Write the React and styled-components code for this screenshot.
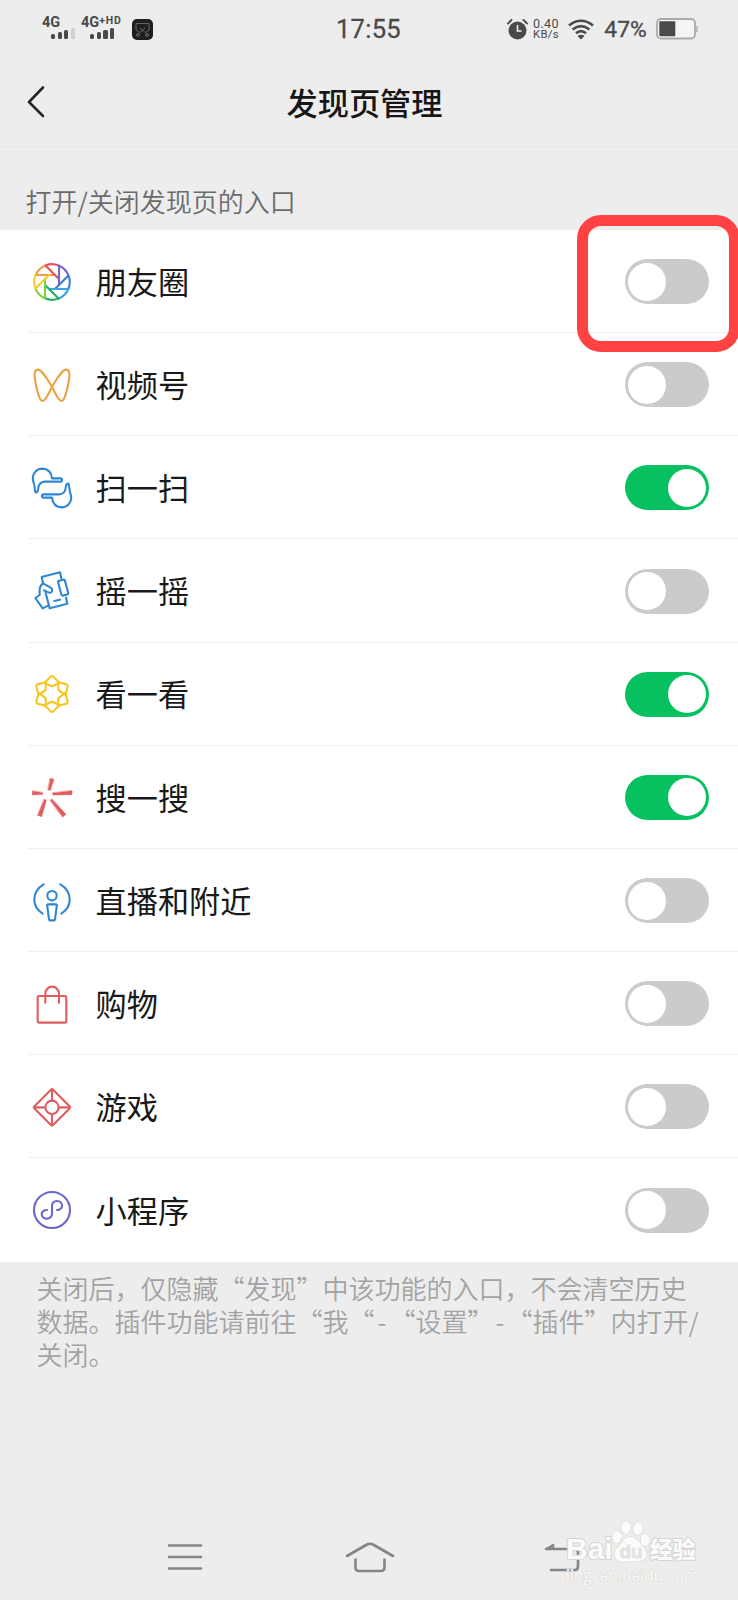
import { useState } from "react";
import styled, { createGlobalStyle } from "styled-components";

const GlobalStyle = createGlobalStyle`
  * {
    box-sizing: border-box;
  }

  body {
    margin: 0;
    background: #ededed;
    font-family: "Noto Sans CJK SC", "Noto Sans", sans-serif;
    text-spacing-trim: space-all;
  }
`;

const Screen = styled.div`
  position: relative;
  width: 738px;
  height: 1600px;
  overflow: hidden;
  display: flex;
  flex-direction: column;
  background: #ededed;
`;

const StatusBar = styled.div`
  height: 58px;
  flex-shrink: 0;
  display: grid;
  grid-template-columns: 1fr auto 1fr;
  align-items: center;
  padding: 0 40px 0 42px;
  color: #4a4a4a;
  font-family: Roboto, sans-serif;
`;

const StatusGroup = styled.div`
  display: flex;
  align-items: center;
  justify-content: ${(props) => (props.$end ? "flex-end" : "flex-start")};

  svg {
    display: block;
    flex-shrink: 0;
  }
`;

const Signal = styled.div`
  width: ${(props) => props.$width}px;
  height: 24px;
  margin-right: ${(props) => props.$gap}px;
  display: flex;
  flex-direction: column;
  font-size: 14.5px;
  font-weight: 700;
  line-height: 11px;
  white-space: nowrap;

  sup {
    font-size: 10.5px;
    line-height: 0;
    vertical-align: 3px;
    letter-spacing: 0.8px;
  }
`;

const Bars = styled.div`
  display: flex;
  align-items: flex-end;
  gap: 2.5px;
  height: 11px;
  margin-left: 9px;
`;

const Bar = styled.i`
  width: 4.2px;
  height: ${(props) => props.$height}px;
  border-radius: 1.5px;
  background: ${(props) => (props.$weak ? "#cfcfcf" : "#4a4a4a")};
`;

const Clock = styled.div`
  margin-right: 3px;
  padding-top: 1px;
  font-size: 25.5px;
  letter-spacing: 0.3px;
  line-height: 57px;
  -webkit-text-stroke: 0.3px #4a4a4a;
`;

const Speed = styled.div`
  width: 28px;
  margin-left: 4px;
  text-align: center;
  font-size: 12.6px;
  line-height: 11.5px;
  letter-spacing: 0.3px;

  small {
    display: block;
    font-size: 11.3px;
  }
`;

const Percent = styled.div`
  width: 45px;
  margin: 0 8px 0 9px;
  padding-top: 1px;
  font-size: 22.8px;
  line-height: 30px;
  text-align: center;
  -webkit-text-stroke: 0.3px #4a4a4a;
`;

const Header = styled.header`
  height: 89px;
  flex-shrink: 0;
  display: grid;
  grid-template-columns: 60px 1fr 69px;
  align-items: center;
  border-bottom: 1px solid #e6e6e6;
`;

const BackButton = styled.button`
  border: 0;
  padding: 0 0 0 25.5px;
  background: none;

  svg {
    display: block;
  }
`;

const Title = styled.h1`
  margin: 0;
  padding-bottom: 1px;
  font-size: 31.2px;
  font-weight: 500;
  line-height: 44px;
  text-align: center;
  color: #161616;
`;

const SectionLabel = styled.div`
  height: 83px;
  flex-shrink: 0;
  padding: 34.5px 0 0 25.5px;
  font-size: 26px;
  font-weight: 350;
  line-height: 38px;
  color: #6b6b6b;
`;

const List = styled.ul`
  margin: 0;
  padding: 0;
  list-style: none;
  background: #fff;
`;

const Row = styled.li`
  height: 103.17px;
  padding-left: 28px;
  display: flex;
  align-items: stretch;
`;

const RowBody = styled.div`
  flex: 1;
  display: flex;
  align-items: center;
  padding: 1px 29px 0 0;
  border-bottom: ${(props) => (props.$last ? "0" : "1.5px solid #efefef")};
`;

const RowIcon = styled.svg`
  width: 48px;
  height: 48px;
  flex-shrink: 0;
  margin: 0 20px 0 -0.5px;
  fill: none;
  stroke: ${(props) => props.$color};
  stroke-width: 6.3;
  stroke-linecap: round;
  stroke-linejoin: round;
`;

const RowLabel = styled.span`
  flex: 1;
  padding-bottom: 1.5px;
  font-size: 31.2px;
  line-height: 44px;
  color: #191919;
`;

const Switch = styled.button`
  width: 84px;
  height: 45px;
  padding: 3.5px 3px;
  border: 0;
  border-radius: 23px;
  display: flex;
  justify-content: ${(props) => (props.$on ? "flex-end" : "flex-start")};
  background: ${(props) => (props.$on ? "#07c160" : "#cbcbcb")};
`;

const Knob = styled.span`
  width: 38px;
  height: 38px;
  border-radius: 50%;
  background: #fff;
`;

const Note = styled.p`
  margin: 0;
  padding: 9px 0 0 36.5px;
  font-size: 26px;
  font-weight: 350;
  line-height: 33.3px;
  white-space: nowrap;
  color: #a3a3a3;
`;

const Dash = styled.span`
  display: inline-block;
  width: ${(props) => props.$width}px;
  text-align: center;
`;

const NavBar = styled.nav`
  height: 86px;
  margin-top: auto;
  flex-shrink: 0;
  padding: 0 75px 0 83px;
  display: grid;
  grid-template-columns: 204px 165px 1fr;
  align-items: center;
  justify-items: center;
  fill: none;
  stroke: #858585;
  stroke-width: 2.6;
  stroke-linecap: round;
  stroke-linejoin: round;

  svg:last-child {
    margin-left: 8px;
  }
`;

const Highlight = styled.div`
  position: absolute;
  left: 577px;
  top: 215px;
  width: 163px;
  height: 137px;
  border: 11px solid #ff4242;
  border-radius: 24px;
  pointer-events: none;
`;

const Watermark = styled.div`
  position: absolute;
  left: 566px;
  top: 1519px;
  width: 134px;
  color: #fbfbfb;
  font-family: "Liberation Sans", "Noto Sans CJK SC", sans-serif;
  paint-order: stroke fill;
  -webkit-text-stroke: 2px #d4d4d4;
`;

const WatermarkBrand = styled.div`
  height: 47px;
  display: flex;
  align-items: flex-end;
  font-weight: 700;
  font-size: 30px;
  line-height: 34px;

  svg {
    flex-shrink: 0;
    margin: 0 0 3px -2px;
  }

  b {
    font-size: 23px;
    line-height: 34px;
    margin: 0 0 -1px 1px;
  }
`;

const WatermarkUrl = styled.div`
  margin-top: -1px;
  font-family: "Open Sans", sans-serif;
  font-size: 15.5px;
  line-height: 20px;
  letter-spacing: 0.05px;
  -webkit-text-stroke: 1.2px #dadada;
`;

const bladeColors = [
  "#f09a4a",
  "#e8505b",
  "#7467cf",
  "#3f78d8",
  "#38a6e6",
  "#1fb264",
  "#7fd03c",
  "#f6c92c",
];

const MomentsIcon = () => (
  <RowIcon viewBox="-72 -72 144 144" $color="none">
    {bladeColors.map((color, i) => (
      <path
        key={color}
        stroke={color}
        transform={`rotate(${i * 45})`}
        d="M8.7 -21H-49A53.3 53.3 0 0 1 -19.8 -49.5"
      />
    ))}
  </RowIcon>
);

const ChannelsIcon = () => (
  <RowIcon viewBox="-72 -72 144 144" $color="#eba244">
    <path d="M0 5C-15 -19 -30 -46 -43 -46C-56 -46 -53 -22 -48 0C-43 25 -37 48 -28 48C-19 48 -9 23 0 5C15 -19 30 -46 43 -46C56 -46 53 -22 48 0C43 25 37 48 28 48C19 48 9 23 0 5Z" />
  </RowIcon>
);

const hand =
  "M-50 12C-53 2 -51 -7 -56 -19C-62 -37 -50 -57 -30 -58C-13 -58 -2 -48 0 -29H25C32 -29 32 -19 25 -19H-22C-33 -18 -40 -11 -41 0C-42 10 -46 17 -50 12Z";

const ScanIcon = () => (
  <RowIcon viewBox="-72 -72 144 144" $color="#2f86d3">
    <path d={hand} />
    <path d={hand} transform="rotate(180)" />
  </RowIcon>
);

const ShakeIcon = () => (
  <RowIcon viewBox="-72 -72 144 144" $color="#2f86d3">
    <path d="M-27 -23L-31 -42L24 -56L28 -38" />
    <rect x="-10.5" y="-23" width="21" height="46" rx="4" transform="translate(33.5 -10) rotate(-15)" />
    <path d="M-19 6L-7 52L46 38L42 20" />
    <path d="M-27 -23C-37 -15 -38 -8 -37 12L-50 21L-28 52L-10 43" />
    <path d="M-27 -23L-4 -10C4 -4 1 4 -5 5C-12 7 -17 1 -24 -2" />
    <path d="M7 30L24 26" />
  </RowIcon>
);

const LookIcon = () => (
  <RowIcon viewBox="-72 -72 144 144" $color="#f6c51f">
    {[0, 60, 120, 180, 240, 300].map((angle) => (
      <path
        key={angle}
        transform={`rotate(${angle})`}
        d="M-4 -52Q0 -55 4 -52Q14 -41 20 -36Q17 -29 0 -23Q-17 -29 -20 -36Q-14 -41 -4 -52Z"
      />
    ))}
  </RowIcon>
);

const SearchIcon = () => (
  <RowIcon viewBox="-72 -72 144 144" $color="none">
    <g fill="#e05c5f" stroke="#e05c5f" strokeWidth="1.5">
      <path d="M-5 -56L6 -53L-5 -20L-12 -21Z" />
      <path d="M-59 -18V-6L-28 -8V-13Z" />
      <path d="M60 -19V-7L2 -6V-12Z" />
      <path d="M-23 7L-17 10L-31 59L-43 55Z" />
      <path d="M-5 10L0 6L42 52L32 60Z" />
    </g>
  </RowIcon>
);

const LiveIcon = () => (
  <RowIcon viewBox="-72 -72 144 144" $color="#2f86d3">
    <circle cx="0" cy="-16" r="14" />
    <path d="M-12 10H12Q15 10 14.500 13L9 55Q8.500 58 6 58H-6Q-8.500 58 -9 55L-14.500 13Q-15 10 -12 10Z" />
    <path d="M-25 -50C-62 -28 -62 16 -28 38M25 -50C62 -28 62 16 28 38" />
  </RowIcon>
);

const ShoppingIcon = () => (
  <RowIcon viewBox="-72 -72 144 144" $color="#e05c5f">
    <rect x="-43" y="-24" width="86" height="80" rx="5" />
    <path d="M-20 -4V-31A20.500 21 0 0 1 21 -31V-4" />
  </RowIcon>
);

const GamesIcon = () => (
  <RowIcon viewBox="-72 -72 144 144" $color="#e05c5f">
    <path d="M-4 -51Q0 -55 4 -51L52 -3Q57 1 52 5L4 53Q0 57 -4 53L-52 5Q-57 1 -52 -3Z" />
    <circle cx="0" cy="1" r="20" />
    <path d="M0 -53V-19M0 21V55M-54 1H-20M20 1H54" />
  </RowIcon>
);

const MiniProgramIcon = () => (
  <RowIcon viewBox="-72 -72 144 144" $color="#6c66cf">
    <circle cx="0" cy="0" r="54" />
    <path d="M15 0C24 0 30 -6 30 -13C30 -21 23 -27 15 -27C6 -27 0 -21 0 -13V11C0 19 -7 26 -15 26C-24 26 -31 20 -31 12C-31 5 -24 0 -15 0" />
  </RowIcon>
);

const entries = [
  { label: "朋友圈", icon: MomentsIcon, on: false },
  { label: "视频号", icon: ChannelsIcon, on: false },
  { label: "扫一扫", icon: ScanIcon, on: true },
  { label: "摇一摇", icon: ShakeIcon, on: false },
  { label: "看一看", icon: LookIcon, on: true },
  { label: "搜一搜", icon: SearchIcon, on: true },
  { label: "直播和附近", icon: LiveIcon, on: false },
  { label: "购物", icon: ShoppingIcon, on: false },
  { label: "游戏", icon: GamesIcon, on: false },
  { label: "小程序", icon: MiniProgramIcon, on: false },
];

const AppBadge = () => (
  <svg width="21" height="21" viewBox="0 0 21 21">
    <rect width="21" height="21" rx="5" fill="#1f1f1f" />
    <g fill="none" stroke="#666" strokeWidth="1">
      <path d="M4 4.500H17V11L14 13M4 4.500V11L7 13M4 17L13 9M17 17L8 9" />
      <circle cx="6" cy="16" r="1.500" />
      <circle cx="15" cy="16" r="1.500" />
    </g>
  </svg>
);

const AlarmIcon = () => (
  <svg width="21" height="21" viewBox="0 0 21 21">
    <circle cx="10.500" cy="11.500" r="9" fill="#4a4a4a" />
    <path d="M10.500 6V12H14.500" fill="none" stroke="#ededed" strokeWidth="1.600" />
    <path d="M1 4.500L4.500 1M20 4.500L16.500 1" stroke="#4a4a4a" strokeWidth="1.900" strokeLinecap="round" />
  </svg>
);

const WifiGlyph = styled.svg`
  width: 26px;
  height: 21px;
  margin-left: 8px;
`;

const WifiIcon = () => (
  <WifiGlyph viewBox="0 0 26 21">
    <g fill="none" stroke="#4a4a4a" strokeWidth="2.500">
      <path d="M1 6.500Q13 -3 25 6.500" />
      <path d="M4.500 10.500Q13 3.800 21.500 10.500" />
      <path d="M8 14.300Q13 10 18 14.300" />
    </g>
    <path d="M9.500 17Q13 14.500 16.500 17L13 20.500Z" fill="#4a4a4a" />
  </WifiGlyph>
);

const BatteryIcon = () => (
  <svg width="42" height="22" viewBox="0 0 42 22">
    <rect x="1" y="1" width="38" height="19.500" rx="4" fill="#f4f4f4" stroke="#a9a9a9" strokeWidth="1.800" />
    <rect x="3.300" y="3.300" width="16" height="15" rx="1" fill="#4a4a4a" />
    <path d="M41 8V14" stroke="#b5b5b5" strokeWidth="1.600" />
  </svg>
);

const PawIcon = () => (
  <svg width="38" height="44" viewBox="0 0 38 44" fill="#fbfbfb" stroke="#d4d4d4" strokeWidth="1.200">
    <ellipse cx="6" cy="18" rx="4.800" ry="6.200" />
    <ellipse cx="15" cy="8.500" rx="4.800" ry="6.500" />
    <ellipse cx="27" cy="9.500" rx="4.800" ry="6.500" transform="rotate(12 27 9.500)" />
    <ellipse cx="34" cy="21" rx="4.500" ry="6" />
    <path d="M19 18C12 18 10 26 6 29C1 34 4 43 11 43C15 43 17 42 19 42C22 42 25 43 29 42C36 41 38 34 33 29C29 25 27 18 19 18Z" />
    <text x="8.500" y="39" fontSize="19" fontWeight="700" fill="#e3e3e3" stroke="#d0d0d0" strokeWidth="0.500">
      du
    </text>
  </svg>
);

export default function App() {
  const [items, setItems] = useState(entries);

  const toggle = (index) => {
    setItems(items.map((item, i) => (i === index ? { ...item, on: !item.on } : item)));
  };

  return (
    <>
      <GlobalStyle />
      <Screen>
        <StatusBar>
          <StatusGroup>
            <Signal $width={33} $gap={6}>
              <span>4G</span>
              <Bars>
                <Bar $height={5.5} />
                <Bar $height={7} />
                <Bar $height={9} />
                <Bar $height={11} $weak />
              </Bars>
            </Signal>
            <Signal $width={43} $gap={8}>
              <span>
                4G<sup>+HD</sup>
              </span>
              <Bars>
                <Bar $height={5.5} />
                <Bar $height={7} />
                <Bar $height={9} />
                <Bar $height={11} />
              </Bars>
            </Signal>
            <AppBadge />
          </StatusGroup>
          <Clock>17:55</Clock>
          <StatusGroup $end>
            <AlarmIcon />
            <Speed>
              0.40<small>KB/s</small>
            </Speed>
            <WifiIcon />
            <Percent>47%</Percent>
            <BatteryIcon />
          </StatusGroup>
        </StatusBar>

        <Header>
          <BackButton aria-label="返回">
            <svg width="20" height="34" viewBox="0 0 20 34" fill="none" stroke="#262626" strokeWidth="2.600" strokeLinecap="round" strokeLinejoin="round">
              <path d="M17 2.500L3 17L17 31" />
            </svg>
          </BackButton>
          <Title>发现页管理</Title>
        </Header>

        <SectionLabel>打开/关闭发现页的入口</SectionLabel>

        <List>
          {items.map((item, index) => (
            <Row key={item.label}>
              <RowBody $last={index === items.length - 1}>
                <item.icon />
                <RowLabel>{item.label}</RowLabel>
                <Switch $on={item.on} role="switch" aria-checked={item.on} onClick={() => toggle(index)}>
                  <Knob />
                </Switch>
              </RowBody>
            </Row>
          ))}
        </List>

        <Note>
          关闭后，仅隐藏“发现”中该功能的入口，不会清空历史
          <br />
          数据。插件功能请前往“我“<Dash $width={15}>-</Dash>“设置”<Dash $width={13}>-</Dash>“插件”内打开/
          <br />
          关闭。
        </Note>

        <NavBar>
          <svg width="36" height="28" viewBox="0 0 36 28">
            <path d="M2 2.500H34M2 14H34M2 25.500H34" />
          </svg>
          <svg width="50" height="32" viewBox="0 0 50 32">
            <path d="M2 15L22 3.500Q25 2 28 3.500L48 15" />
            <path d="M10.500 18.500V26.500Q10.500 30 14 30H36Q39.500 30 39.500 26.500V18.500" />
          </svg>
          <svg width="36" height="30" viewBox="0 0 36 30">
            <path d="M2 7H31Q34 7 34 10V24Q34 28 31 28H7" />
            <path d="M2 7L9.500 2.500V7Z" fill="#858585" strokeWidth="1.500" />
          </svg>
        </NavBar>

        <Highlight />
        <Watermark>
          <WatermarkBrand>
            Bai
            <PawIcon />
            <b>经验</b>
          </WatermarkBrand>
          <WatermarkUrl>jingyan.baidu.com</WatermarkUrl>
        </Watermark>
      </Screen>
    </>
  );
}
